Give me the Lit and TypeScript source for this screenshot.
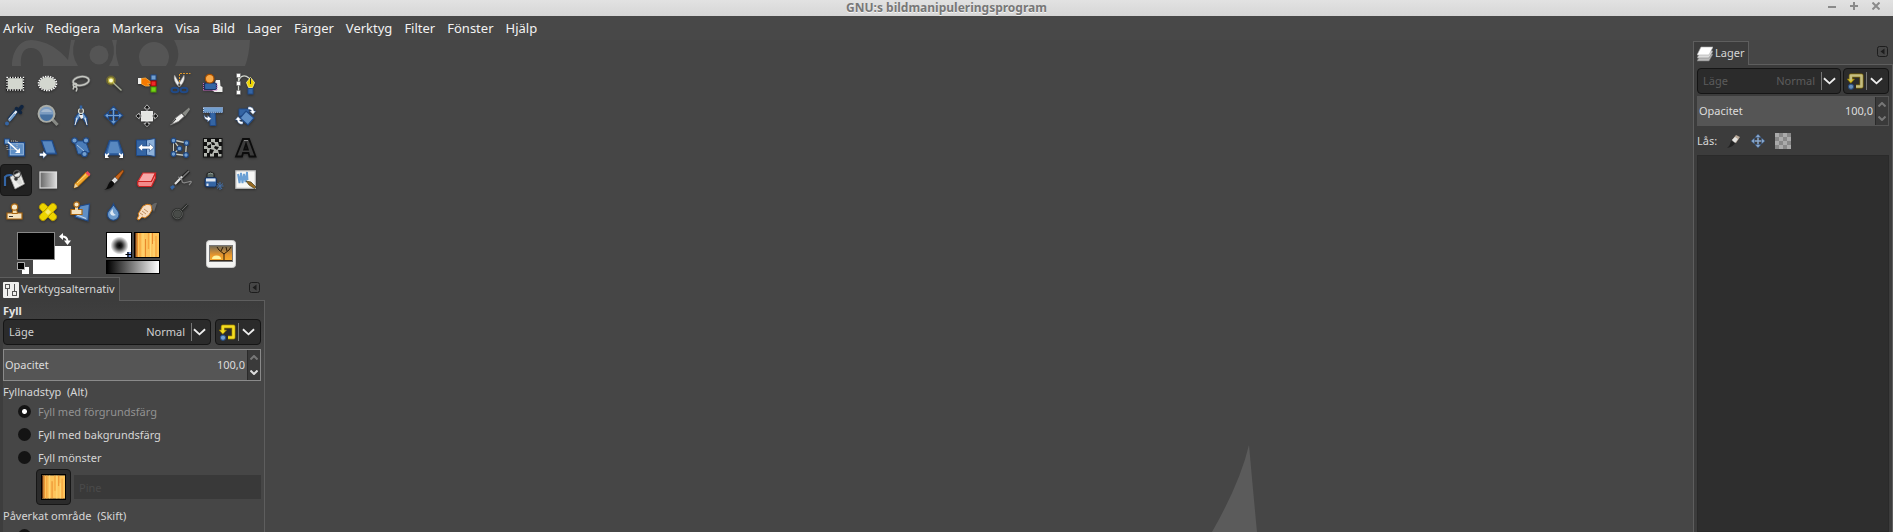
import { LitElement, html, css, svg } from "lit";
import { customElement, state } from "lit/decorators.js";

const B = "#3465a4";
const D = "#204a87";
const L = "#729fcf";

const tools: { name: string; art: unknown }[] = [
  { name: "Rektangelmarkering", art: svg`<rect x="4" y="5.5" width="16.5" height="12.5" fill="#d3d7cf" stroke="#000" stroke-width="1.4"/><rect x="4" y="5.5" width="16.5" height="12.5" fill="none" stroke="#fff" stroke-width="1.4" stroke-dasharray="1.3 1.3"/>` },
  { name: "Ellipsmarkering", art: svg`<ellipse cx="11.5" cy="11.5" rx="9" ry="7" fill="#d3d7cf" stroke="#222" stroke-width="1.2"/><ellipse cx="11.5" cy="11.5" rx="9" ry="7" fill="none" stroke="#fff" stroke-width="1.6" stroke-dasharray="1.5 1"/>` },
  { name: "Fri markering", art: svg`<g fill="none" stroke="#666"  stroke-width="3"><ellipse cx="12" cy="9" rx="8" ry="4.3" transform="rotate(-8 12 9)"/></g><g fill="none" stroke="#c4c6c0" stroke-width="1.5"><ellipse cx="12" cy="9" rx="8" ry="4.3" transform="rotate(-8 12 9)"/><circle cx="6" cy="13" r="1.8"/><path d="M6 14.5c3 1 2 3 1 5M5 14.5l-1 3"/></g>` },
  { name: "Luddig markering", art: svg`<path d="M11 10.5l8.5 8" stroke="#3b3e37" stroke-width="3"/><path d="M11 10.5l8.5 8" stroke="#a9ad9b" stroke-width="1.4"/><circle cx="9" cy="8.5" r="5" fill="#edd400" opacity=".25"/><circle cx="9" cy="8.5" r="3.2" fill="#f4e64a" opacity=".6"/><circle cx="9" cy="8.5" r="2" fill="#ffffd0"/>` },
  { name: "Markera efter färg", art: svg`<path d="M3 6h3.5v6H3z" fill="#eeeeec"/><path d="M6.500 6.500l4-.5 6 4.500v1.500l-4-.5 2 2.500h-4l-4-2z" fill="#f57900" stroke="#fcaf3e" stroke-width=".8"/><rect x="16" y="3" width="5" height="5" fill="${L}" stroke="${D}"/><rect x="16" y="9" width="5" height="5" fill="#ef2929" stroke="#a40000"/><rect x="16" y="15" width="5" height="5" fill="#73d216" stroke="#4e9a06"/>` },
  { name: "Sax", art: svg`<path d="M6.500 3c-1.500 5 1.500 9 4.500 12l1.500-2zM16 3c1.500 5-1.500 9-4.500 12l-1.500-2z" fill="#eeeeec" stroke="#888" stroke-width=".6"/><g fill="none" stroke="${D}" stroke-width="2"><ellipse cx="7" cy="18" rx="3.500" ry="2.300"/><ellipse cx="16" cy="18" rx="3.500" ry="2.300"/></g><path d="M11.500 10v-8.500h11" fill="none" stroke="#d9952a" stroke-dasharray="2 1"/>` },
  { name: "Förgrundsmarkering", art: svg`<path d="M11 18l2-5 2-5h4l.5 6 2 1v5h-8z" fill="#eeeeec"/><rect x="3.500" y="11" width="12" height="6.500" rx="1.500" fill="${B}" stroke="#1d2f60" stroke-width="1.200"/><circle cx="8.700" cy="6.700" r="4.300" fill="#f8a848" stroke="#a85000" stroke-width="1.200"/><path d="M2.500 18.500h13.500v-7M2.500 18v-7" fill="none" stroke="#c6c" stroke-width=".9" stroke-dasharray="1 1"/>` },
  { name: "Banor", art: svg`<path d="M4.500 3v17.500M4.500 11C5 4 10 2 15 6l3 2" fill="none" stroke="#d3d7cf" stroke-width="1.300"/><g fill="#fff" stroke="#666" stroke-width=".5"><rect x="2.500" y="1.500" width="4" height="4"/><rect x="2.500" y="9.500" width="4" height="4"/><rect x="2.500" y="18.500" width="4" height="4"/></g><path d="M16.500 5.500l4 5-2 5h-4l-2-5z" fill="#edd400" stroke="#fff6a0" stroke-width=".8"/><path d="M16.500 6v6" stroke="#333"/><rect x="14" y="16.500" width="5" height="5.500" fill="${B}" stroke="${D}"/>` },

  { name: "Färgpipett", art: svg`<path d="M15 5l-9 11" stroke="#16365f" stroke-width="4.500"/><path d="M15 5.500l-9 10.500" stroke="#e8eef5" stroke-width="2.200"/><path d="M12 10l-6 7" stroke="${L}" stroke-width="2"/><path d="M13.500 4.500l4 4M16 6l3-3.500" stroke="#10243f" stroke-width="3.500" stroke-linecap="round"/><circle cx="4" cy="19.500" r="2" fill="${B}"/>` },
  { name: "Zoom", art: svg`<path d="M16 15l5.500 6" stroke="#888a85" stroke-width="3.200"/><circle cx="10.500" cy="9.800" r="8" fill="#7d9cc0" stroke="#a9aca6" stroke-width="2"/><path d="M4 10.500h13a6.500 6.500 0 01-13 0z" fill="#47709f"/><path d="M5 8a6 5 0 0111 0z" fill="#a5b9cf"/>` },
  { name: "Mått", art: svg`<path d="M11 7l-5 7v7l5-8M13 7l5 7v7l-5-8" fill="${L}" stroke="${D}" stroke-width="1.200"/><path d="M8 14l-2 7M16 14l2 7" stroke="#eee"/><circle cx="12" cy="7" r="2.500" fill="#555" stroke="#d3d7cf" stroke-width="1.200"/><rect x="10.700" y="1.500" width="2.600" height="3.500" fill="${B}"/><path d="M10 11h4v3l-2 1z" fill="#eee"/>` },
  { name: "Flytta", art: svg`<path d="M11.500 3v17M3 11.500h17" stroke="${D}" stroke-width="3.200"/><path d="M11.500 2.300l3.700 4.200H7.800zM11.500 20.700l3.700-4.200H7.800zM2.300 11.500l4.200-3.700v7.400zM20.700 11.500l-4.200-3.700v7.400z" fill="${L}" stroke="${D}" stroke-width="1.200"/><path d="M11.500 4v15M4 11.500h15" stroke="${L}" stroke-width="1.200"/>` },
  { name: "Justering", art: svg`<rect x="6.500" y="7.500" width="11" height="9.500" fill="#e4e5e2" stroke="#fff" stroke-width=".8"/><g fill="#111" stroke="#ccc" stroke-width=".8"><path d="M12 .8l3 3.400h-2v2h-2v-2H9zM12 22.800l3-3.400h-2v-2h-2v2H9zM.8 12l3.400-3v2h2v2h-2v2zM23 12l-3.400-3v2h-2v2h2v2z"/></g>` },
  { name: "Beskär", art: svg`<path d="M21 3.500l-7 6 3 3 5-7z" fill="#888a85"/><path d="M14 9L8 13.500 2.500 21l8-3.500 6-5.500z" fill="#eeeeec" stroke="#777" stroke-width=".8"/><path d="M13.500 9l3.500 3.500M8 15l-4.500 5" stroke="#333"/>` },
  { name: "Enhetlig transformering", art: svg`<path d="M9 7h5l1 14.500H9z" fill="${B}" stroke="${D}"/><rect x="2.500" y="3.500" width="19" height="4.800" fill="${L}" stroke="${D}"/><rect x="2.500" y="3.500" width="19" height="4.800" fill="none" stroke="#dfe9f4" stroke-dasharray="1 1"/><path d="M3 10.500q1 3 3.500 3v-2l4 3.200-4 3.200v-2Q3 16 3 10.500z" fill="#fff" stroke="${D}" stroke-width=".5"/>` },
  { name: "Rotera", art: svg`<path d="M5 5h10v7H5z" fill="${B}" stroke="${D}"/><path d="M12 7l8 7-6 7-8-7z" fill="#5f8fc6" stroke="${D}" stroke-width="1.200"/><path d="M14 3q5-1 6 4h2l-3 3.500L15.500 7h2q-.5-2-3.500-1.500zM9 20q-5 1-6-4H1l3-3.500L7.500 16h-2q.5 2 3.500 1.500z" fill="#fff" stroke="${D}" stroke-width=".5"/>` },

  { name: "Skala", art: svg`<rect x="6" y="6.500" width="15.500" height="13.500" fill="#5f8fc6" stroke="${D}" stroke-width="1.300"/><rect x="7.300" y="7.800" width="13" height="11" fill="none" stroke="#9dbde0" stroke-width=".8"/><rect x="4" y="5" width="10" height="8.500" fill="none" stroke="#bbb" stroke-dasharray="1 1"/><rect x="1.500" y="3" width="5" height="5" fill="${L}" stroke="${D}"/><path d="M5 6l10 9" stroke="#fff" stroke-width="1.500"/><path d="M17 17v-5l-5 5z" fill="#fff"/>` },
  { name: "Skjuv", art: svg`<path d="M5.500 4.500h10.500l4.500 13.500H10z" fill="${B}" stroke="${D}" stroke-width="1.200"/><path d="M6.500 5.500h9l3.500 11h-8.500z" fill="#5888c0"/><path d="M3.500 17.300h3.500v-2.300l4 3.700-4 3.700v-2.400H3.500z" fill="#fff" stroke="${D}" stroke-width=".5"/>` },
  { name: "Handtagstransformering", art: svg`<path d="M5 5h11.500l4 11-5 2H9z" fill="#4a7cb8" stroke="${D}"/><g fill="${L}" stroke="${D}" stroke-width="1.200"><circle cx="5.500" cy="4.500" r="2.700"/><circle cx="17" cy="4.500" r="2.700"/><circle cx="15.500" cy="18" r="2.700"/></g><path d="M8 9l7 6" stroke="#a8c4e2"/>` },
  { name: "Perspektiv", art: svg`<path d="M7.500 4.500h9l5 14.500h-19z" fill="${B}" stroke="${D}" stroke-width="1.200"/><path d="M8.500 6h7l3 11H5.500z" fill="#5888c0"/><path d="M3 22v-5l1.500 1.500 2-1.500 1 1-2 2L7 22zM21 22v-5l-1.500 1.500-2-1.500-1 1 2 2L17 22z" fill="#fff"/>` },
  { name: "Vänd", art: svg`<path d="M1.500 4h10v15.500h-10z" fill="${B}" stroke="${D}"/><path d="M11.500 4L20 2.500v18L11.500 19z" fill="#8db1da" stroke="${D}"/><path d="M3 11.500l4.500-4V10h7V7.500l4.500 4-4.500 4V13h-7v2.500z" fill="#fff" stroke="${D}" stroke-width=".6"/>` },
  { name: "Burtransformering", art: svg`<path d="M5.500 4l13 3-1 12.500L5.500 18l6-5.500z" fill="none" stroke="#c8ccc4" stroke-width="1.300"/><path d="M5.500 4v14" stroke="#c8ccc4"/><g fill="${L}" stroke="${D}" stroke-width="1.200"><circle cx="5.500" cy="4.500" r="2.300"/><circle cx="18.500" cy="7" r="2.300"/><circle cx="18" cy="19" r="2.300"/><circle cx="5.500" cy="18" r="2.300"/><circle cx="11.500" cy="12.500" r="2.300"/></g>` },
  { name: "Varptransformering", art: svg`<rect x="2.500" y="2.500" width="18.500" height="18.500" fill="#b4b7b1" stroke="#111"/><path d="M6 3h4v3H6zM14 3h4v3h-4zM3 6h3v4H3zM10 6c3 0 4 1 4 3h-3zM17 6h4v4h-3zM6 10l4-2v4H7zM14 10l4 1-2 3-3-2zM3 13h3v4H3zM9 13l4 1-2 4-3-1zM17 14h4v4h-3zM6 17h3v4H6zM13 17h4v4h-4z" fill="#111"/>` },
  { name: "Text", art: svg`<path fill-rule="evenodd" d="M9 3h6l6.500 17.500h-6l-1-3.500H9l-1 3.500H2zM12 8l-1.800 5.500h3.600z" fill="#3c3c3c" stroke="#0c0c0c" stroke-width="1.800"/><path d="M10 4.500h4" stroke="#888"/>` },

  { name: "Hinkfyllning", art: svg`<path d="M2 18V9q3-3 8-1" fill="none" stroke="${B}" stroke-width="2.200"/><path d="M7 9l10-5 4.500 12-9.500 5z" fill="#eeeeec" stroke="#999" stroke-width=".8"/><path d="M9 10l7-3.500 3.500 9-3 1.500z" fill="#d8d9d6"/><circle cx="14" cy="6" r="3.500" fill="none" stroke="#555" stroke-width="1.300"/><circle cx="13" cy="11" r="1.800" fill="#333"/>` },
  { name: "Övertoning", art: svg`<defs><linearGradient id="gr"><stop offset="0" stop-color="#666"/><stop offset="1" stop-color="#ddd"/></linearGradient></defs><rect x="4" y="4" width="16.500" height="16" fill="url(#gr)" stroke="#ddd" stroke-width="1.200"/>` },
  { name: "Blyertspenna", art: svg`<path d="M17 4l3.500 3.500L9 18.500 5 20l1-4.500z" fill="#f0a830" stroke="#9a5a00" stroke-width=".9"/><path d="M16.500 5l3.500 3.500 1.500-2.500-3-3z" fill="#ef4a5a"/><path d="M6 15.500L9 18.500 5 20z" fill="#e9d3a8"/><path d="M8 15L17 6.500" stroke="#fce08a"/>` },
  { name: "Pensel", art: svg`<path d="M20.500 2L13 9l3 3 6-9z" fill="#c4641c" stroke="#6d3000" stroke-width=".7"/><path d="M13 9l3 3-3.500 3.500-3-3z" fill="#ddd" stroke="#666" stroke-width=".6"/><path d="M9.500 12.500l3 3q-2 5-10.500 6.500 3-1 4-5 1-3 3.500-4.500z" fill="#0c0c0c"/>` },
  { name: "Radergummi", art: svg`<path d="M8 5h12.500l-4 8.500H3z" fill="#f7a8a8" stroke="#d33" stroke-width="1.200"/><path d="M3 13.500h13.500l4-8.500v5l-4 8.500H4q-2-1-1-5z" fill="#f28a8a" stroke="#c22" stroke-width="1.200"/>` },
  { name: "Sprutpistol", art: svg`<path d="M21 3L8 15.500" stroke="#222" stroke-width="3.600"/><path d="M21 3L8 15.500" stroke="#777" stroke-width="1.500"/><path d="M14 8.500L7 16" stroke="#ddd" stroke-width="2"/><path d="M10 9q4 1 4 4t6 1 1 3" fill="none" stroke="#8a8a8a" stroke-width="1.200"/><path d="M2 19l3-2 2 2-3 3z" fill="${B}"/>` },
  { name: "Bläck", art: svg`<path d="M6 9.500V5.500q3.500-3 7 0v4z" fill="#56635e" stroke="#222"/><path d="M7 6q2.500-1.500 5 0" fill="none" stroke="#8d9893"/><rect x="4" y="9.500" width="11.500" height="9.500" rx="2" fill="${B}" stroke="#16305a"/><path d="M5 10.500h9.500v3H5zM5.500 15.500h2v2.500h-2z" fill="#dfe6ee"/><path d="M16 20.500l6-5M16.500 15l4.500 6M19 14v8M15.500 18h7" stroke="#4470a8"/>` },
  { name: "MyPaint-pensel", art: svg`<rect x="1.800" y="2.800" width="19.500" height="17.500" fill="#f7f7f5" stroke="#bbb" stroke-width="1.200"/><path d="M4 6l1.500 9 1.500-10 1.500 10 1.500-9 1.500 8 1.500-10 .5 8" fill="none" stroke="#6a9fd4" stroke-width="1.900"/><path d="M12 13l5 1 5 5-1.500 1.500L15 17z" fill="#9a6a22" stroke="#442" stroke-width=".7"/>` },

  { name: "Klona", art: svg`<path d="M4 13h15v6H4z" fill="#f4e3c0" stroke="#a86510" stroke-width="1.200"/><path d="M10 9h3.500l1 4.500h-5.500z" fill="#f1dcae" stroke="#a86510"/><circle cx="11.500" cy="7" r="3.200" fill="#f6e8c8" stroke="#a86510" stroke-width="1.200"/><path d="M6 16.500h4" stroke="#333"/>` },
  { name: "Hela", art: svg`<g fill="#edd400" stroke="#b39800" stroke-width=".9"><rect x="1.500" y="8.500" width="21" height="7" rx="3" transform="rotate(45 12 12)"/><rect x="1.500" y="8.500" width="21" height="7" rx="3" transform="rotate(-45 12 12)"/></g><path d="M9 12l3-3 3 3-3 3z" fill="#f9ea6a"/>` },
  { name: "Perspektivkloning", art: svg`<path d="M11 6l9.500-2-1.500 17L6 17z" fill="#5f8fc6" stroke="${D}" stroke-width="1.200"/><path d="M8 15l9 3.500" stroke="#c3d6ea" stroke-width="1.200"/><path d="M2 9.500h11v5H2z" fill="#f4e3c0" stroke="#a86510" stroke-width="1.200"/><path d="M6 6h3v4H6z" fill="#f1dcae"/><circle cx="7.500" cy="4.500" r="2.700" fill="#f6e8c8" stroke="#a86510" stroke-width="1.200"/>` },
  { name: "Gör oskarp/skarp", art: svg`<path d="M11.500 4q1 3 4 6.500a5.800 5.800 0 11-8.500 0q3.500-3.500 4.500-6.500z" fill="#6f9ccc" stroke="${D}" stroke-width="1.100"/><path d="M8 13q.5-2 3-4-1 4 3 6-5 2-6-2z" fill="#dbe7f3"/>` },
  { name: "Smeta", art: svg`<path d="M16 6q4-4 6-3l-3 9z" fill="#666"/><path d="M8 6q4-3 8-1l1 5-3 5-4 3-3-1-3 3-2-1 2-4-1-1z" fill="#f6dcc0" stroke="#c9781a"/><path d="M7 11l4 3M9 9l4 3M5 13l3 2" stroke="#a86a30" stroke-width=".7"/>` },
  { name: "Skugga/efterbelys", art: svg`<path d="M13 11l6.500-6.500" stroke="#2b2d2b" stroke-width="3"/><path d="M13 11l6.500-6.500" stroke="#666"/><circle cx="9.500" cy="14" r="4.800" fill="#484b48" stroke="#2a2c2a" stroke-width="2.200"/><circle cx="9.500" cy="14" r="4.800" fill="none" stroke="#686a68" stroke-width=".8"/>` },
];

const menus = ["Arkiv", "Redigera", "Markera", "Visa", "Bild", "Lager", "Färger", "Verktyg", "Filter", "Fönster", "Hjälp"];

const chevron = svg`<svg class="chev" viewBox="0 0 14 8" aria-hidden="true"><path d="M1 1l6 5.500L13 1" fill="none" stroke="#eee" stroke-width="2"/></svg>`;
const up = svg`<svg viewBox="0 0 8 5" width="8" height="5"><path d="M.5 4.500L4 1l3.500 3.500" fill="none" stroke="currentColor" stroke-width="2"/></svg>`;
const down = svg`<svg viewBox="0 0 8 5" width="8" height="5"><path d="M.5.5L4 4 7.500.5" fill="none" stroke="currentColor" stroke-width="2"/></svg>`;
const wood = svg`<svg viewBox="0 0 24 24" class="fill"><rect width="24" height="24" fill="#fdc45c"/><path d="M.5 0v24" stroke="#6b3410" stroke-width="2"/><path d="M2.500 0v24M10.500 6v18M17.500 0v11" stroke="#e8892c" stroke-width="1"/><path d="M5 0v24M13.500 0v16M21 3v21" stroke="#f6a53e" stroke-width="1.300"/><path d="M8 0v24M15.500 0v24M19 8v16" stroke="#ffd978" stroke-width="1"/></svg>`;

@customElement("dock-menu-button")
export class DockMenuButton extends LitElement {
  static styles = css`
    :host { display: block; margin-left: auto; }
    .b { display: block; padding: 0; border: 0; background: none; width: 11px; height: 11px; }
    svg { display: block; }
  `;
  render() {
    return html`<button class="b" aria-label="Konfigurera denna flik"><svg width="11" height="11" viewBox="0 0 11 11"><rect x=".5" y=".5" width="10" height="10" rx="2" fill="none" stroke="#1d1d1d"/><path d="M7.500 2.500v6l-4-3z" fill="#1d1d1d"/></svg></button>`;
  }
}

@customElement("mode-row")
export class ModeRow extends LitElement {
  static properties = { off: { type: Boolean, reflect: true } };
  declare off: boolean;
  static styles = css`
    :host { display: flex; gap: 4px; height: 26px; }
    :host([off]) { gap: 2px; }
    .box { box-sizing: border-box; display: flex; align-items: center; border: 1px solid #151515; border-radius: 4px; background: #2b2b2b; color: #d0d0d0; }
    .mode { flex: 1; min-width: 0; padding: 0 4px 0 5px; }
    .group { width: 46px; padding: 0 5px 0 3px; justify-content: space-between; }
    select { appearance: none; flex: 1; min-width: 0; height: 24px; border: 0; padding: 0 6px 0 0; background: none; color: inherit; font: inherit; text-align: right; text-align-last: right; opacity: 1; }
    .sep { width: 1px; height: 18px; background: #777; margin-right: 1px; }
    .chev { width: 13px; height: 8px; display: block; }
    :host([off]) label, :host([off]) select { color: #5c5c5c; }
    :host([off]) .art { opacity: .85; }
    button { font: inherit; }
  `;
  render() {
    return html`
      <div class="box mode"><label for="mode">Läge</label>
        <select id="mode" ?disabled=${this.off}><option>Normal</option></select><span class="sep"></span>${chevron}</div>
      <button class="box group" aria-label="Växla lägesgrupp">
        <svg class="art" width="17" height="17" viewBox="0 0 17 17"><g fill="none" stroke-linejoin="round"><path d="M3.800 7V2.500h10.700v11H9" stroke="#8a7000" stroke-width="4"/><path d="M0 6h7.600L3.800 10.200z" fill="#f5dc20" stroke="#8a7000" stroke-width=".7"/><path d="M3.800 7.500V2.500h10.700v11H9" stroke="${this.off ? "#e0d890" : "#f5dc20"}" stroke-width="2.600"/></g><circle cx="4" cy="13.700" r="2.600" fill="${L}" stroke="${D}"/></svg>
        <span class="sep"></span>${chevron}</button>`;
  }
}

@customElement("opacity-row")
export class OpacityRow extends LitElement {
  static properties = { off: { type: Boolean, reflect: true } };
  declare off: boolean;
  static styles = css`
    :host { box-sizing: border-box; display: flex; align-items: center; height: 32px; border: 1px solid #8a8a8a; background: #555; color: #dcdcdc; padding-left: 1px; }
    :host([off]) { border-color: #555; height: 30px; }
    input { flex: 1; min-width: 0; border: 0; background: none; color: inherit; font: inherit; padding: 0 2px 0 0; text-align: right; }
    .spin { align-self: stretch; display: grid; grid-template-rows: 1fr 1fr; width: 12px; background: #3a3a3a; border-left: 1px solid #2a2a2a; }
    button { padding: 0; border: 0; background: none; color: #ddd; display: grid; place-items: center; }
    button.dim, :host([off]) button { color: #777; }
  `;
  render() {
    return html`<label for="o">Opacitet</label><input id="o" value="100,0" />
      <span class="spin"><button class="dim" aria-label="Öka">${up}</button><button aria-label="Minska">${down}</button></span>`;
  }
}

@customElement("app-root")
export class AppRoot extends LitElement {
  @state() private tool = 24;

  static styles = css`
    :host { display: flex; flex-direction: column; height: 100vh; overflow: hidden; background: #464646; color: #d6d6d6; font: 11px/16px "Noto Sans", "Open Sans", sans-serif; }
    * { box-sizing: border-box; }
    button { font: inherit; color: inherit; }
    svg { display: block; }
    .title { flex: none; height: 16px; display: grid; grid-template-columns: 1fr auto 1fr; align-items: start; background: linear-gradient(#e2e2e2, #d6d6d6); color: #777; }
    h1 { grid-column: 2; margin: 0; font-size: 12px; line-height: 15px; font-weight: 700; text-shadow: 0 1px #f4f4f4; }
    .wins { justify-self: end; display: flex; gap: 14px; padding: 2px 13px 0 0; }
    .wins button { border: 0; padding: 0; background: none; width: 8px; height: 8px; }
    .menu { flex: none; height: 24px; display: flex; gap: 12px; padding-left: 3px; background: #484848; }
    .menu button { border: 0; padding: 0; background: none; color: #f2f2f2; font-size: 13px; line-height: 24px; }
    .work { flex: 1; min-height: 0; display: flex; }
    .left { flex: none; width: 265px; display: flex; flex-direction: column; }
    .wilber { flex: none; height: 28px; width: 265px; }
    .tools { display: grid; grid-template-columns: repeat(8, 33px); grid-auto-rows: 32px; }
    .tool { padding: 0; border: 1px solid transparent; border-radius: 4px; background: none; display: grid; place-items: center; width: 32px; }
    .tool.on { background: #222; border-color: #171717; }
    .tool svg { width: 24px; height: 24px; overflow: visible; filter: drop-shadow(0 1px 1px #0005); }
    .ind { display: flex; align-items: flex-start; height: 49px; padding: 4px 29px 0 17px; }
    .colors { width: 54px; display: grid; grid-template: 14px 14px 14px / 16px 22px 16px; }
    .fg { grid-area: 1 / 1 / 3 / 3; z-index: 1; background: #000; border: 1px solid #888; padding: 0; }
    .bg { grid-area: 2 / 2 / 4 / 4; background: #fff; border: 0; padding: 0; }
    .swap { grid-area: 1 / 3; border: 0; background: none; padding: 0 0 0 4px; }
    .reset { grid-area: 3 / 1; border: 0; background: none; padding: 2px 0 0 0; }
    .brushes { margin-left: 35px; display: grid; grid-template: 26px 14px / 26px 26px; gap: 2px; }
    .brushes button { border: 1px solid #000; padding: 0; background: #fff; overflow: hidden; }
    .brushes .grad { grid-column: 1 / 3; background: linear-gradient(90deg, #000, #fff); }
    .fill { width: 100%; height: 100%; }
    .active { margin: 8px 0 0 auto; border: 0; padding: 0; background: none; }
    .tabs { flex: none; height: 24px; display: flex; }
    .tab { display: flex; align-items: center; gap: 2px; border: 1px solid #5e5e5e; border-width: 1px 1px 0 0; background: #3c3c3c; color: #d6d6d6; padding: 0 4px 0 3px; }
    .tab span { line-height: 16px; padding-bottom: 1px; }
    .strip { flex: 1; display: flex; align-items: flex-start; padding: 5px 5px 0 0; border-bottom: 1px solid #5e5e5e; }
    .opts { flex: 1; min-height: 0; overflow: hidden; border-right: 1px solid #5e5e5e; background: linear-gradient(#3c3c3c, #464646 60px); padding: 0 3px; display: flex; flex-direction: column; box-shadow: inset 3px 0 #3d3d3d; }
    .opts > * { flex: none; }
    h2 { margin: 2px 0 0; font-size: 11px; line-height: 16px; color: #e4e4e4; }
    .opts opacity-row { margin-top: 4px; }
    fieldset { border: 0; margin: 0; padding: 0; min-width: 0; }
    legend { padding: 3px 0 0; line-height: 16px; white-space: pre; }
    .radio { display: flex; align-items: center; gap: 7px; height: 23px; padding-left: 15px; }
    .radio.off { color: #929292; }
    .radio input { appearance: none; margin: 0; width: 13px; height: 13px; border-radius: 50%; background: #141414; }
    .radio input:checked { background: radial-gradient(#fff 0 2px, #141414 3px); }
    .pat { display: flex; align-items: center; gap: 3px; padding-left: 33px; height: 36px; }
    .pat button { width: 35px; height: 36px; border: 1px solid #171717; border-radius: 4px; background: #2b2b2b; padding: 4px; }
    .pat .fill { border: 1px solid #000; }
    .pat input { flex: 1; min-width: 0; height: 24px; border: 0; background: #393939; color: #4a4a4a; font: inherit; padding: 0 5px; }
    .canvas { flex: 1; min-width: 0; }
    .right { flex: none; width: 200px; display: flex; flex-direction: column; }
    .right .tabs { margin-top: 1px; }
    .right .tab { border-left-width: 1px; }
    .layers { flex: 1; min-height: 0; display: flex; flex-direction: column; border: 1px solid #5e5e5e; border-width: 0 1px; background: #3c3c3c; padding: 3px 3px 0; }
    .layers opacity-row { margin-top: 2px; }
    .lock { display: flex; align-items: center; height: 29px; gap: 10px; }
    .lock label { display: flex; }
    .lock input { appearance: none; margin: 0; width: 0; height: 0; }
    .list { flex: 1; background: #2e2e2e; border: 1px solid #2a2a2a; }
  `;

  render() {
    return html`
      <header class="title">
        <h1>GNU:s bildmanipuleringsprogram</h1>
        <div class="wins">
          <button aria-label="Minimera"><svg viewBox="0 0 8 8"><path d="M0 5h8" stroke="#8a8a8a" stroke-width="2"/></svg></button>
          <button aria-label="Maximera"><svg viewBox="0 0 8 8"><path d="M0 4h8M4 0v8" stroke="#8a8a8a" stroke-width="2"/></svg></button>
          <button aria-label="Stäng"><svg viewBox="0 0 8 8"><path d="M.5.5l7 7M7.500.5l-7 7" stroke="#8a8a8a" stroke-width="2"/></svg></button>
        </div>
      </header>
      <nav class="menu">${menus.map((m) => html`<button>${m}</button>`)}</nav>
      <div class="work">
        <aside class="left">
          <svg class="wilber" viewBox="0 0 265 28" aria-hidden="true">
            <path d="M12 26C12 11 20 0 31 0Q52 1 68 20L71 0H250Q249 16 245 26H43C44 15 39 8 31 8S20 15 21 26z" fill="#555"/>
            <path d="M75 0h37Q117 14 109 26H78Q70 14 75 0z" fill="#464646"/><circle cx="99" cy="15" r="9.500" fill="#555"/>
            <path d="M117 0h57q8 14 1 26H119q-5-14-2-26z" fill="#464646"/><path d="M142 26a15 15 0 1124 0z" fill="#555"/>
          </svg>
          <div class="tools">
            ${tools.map((t, i) => html`<button class="tool ${i === this.tool ? "on" : ""}" aria-label=${t.name} @click=${() => (this.tool = i)}><svg viewBox="1 0 24 24">${t.art}</svg></button>`)}
          </div>
          <div class="ind">
            <div class="colors">
              <button class="fg" aria-label="Förgrundsfärg"></button><button class="bg" aria-label="Bakgrundsfärg"></button>
              <button class="swap" aria-label="Växla färger"><svg width="12" height="12" viewBox="0 0 12 12"><path d="M3 3.500Q8 3.500 8.500 8" fill="none" stroke="#fff" stroke-width="2"/><path d="M4 0v7L0 3.500zM5 7.500h7L8.500 12z" fill="#fff"/></svg></button>
              <button class="reset" aria-label="Standardfärger"><svg width="12" height="12" viewBox="0 0 12 12"><path d="M5 5h7v7H5z" fill="#fff"/><path d="M.5.5h7v7h-7z" fill="#000" stroke="#aaa"/></svg></button>
            </div>
            <div class="brushes">
              <button aria-label="Pensel"><svg class="fill" viewBox="0 0 24 24"><defs><radialGradient id="br"><stop offset="0"/><stop offset=".3" stop-color="#222"/><stop offset="1" stop-color="#fff"/></radialGradient></defs><circle cx="12.500" cy="12.500" r="9" fill="url(#br)"/><path d="M20 19h4v5h-4z" fill="#7d9be0"/><path d="M18.500 21.500h5.500M21 19v5" stroke="#000" stroke-width="1.200"/></svg></button>
              <button aria-label="Mönster">${wood}</button>
              <button class="grad" aria-label="Övertoning"></button>
            </div>
            <button class="active" aria-label="Aktiv bild"><svg width="30" height="28" viewBox="0 0 30 28"><defs><linearGradient id="sk" x2="0" y2="1"><stop offset="0" stop-color="#6f6a58"/><stop offset=".6" stop-color="#e8962c"/><stop offset="1" stop-color="#f9b030"/></linearGradient></defs><rect x=".5" y=".5" width="29" height="27" rx="3" fill="#f4f4f2" stroke="#ccc"/><rect x="3.500" y="5.500" width="23" height="16" fill="url(#sk)" stroke="#777"/><path d="M6 19a4.500 3.500 0 019 0z" fill="#fff3a0"/><path d="M4 20.500h22" stroke="#3a2a18"/><path d="M18 20v-6l-5-4-2-3M18 14l5-4 2-3M21 11l-1-4M15 11l2-4" fill="none" stroke="#2a1a08"/></svg></button>
          </div>
          <div class="tabs">
            <button class="tab"><svg width="16" height="16" viewBox="0 0 16 16"><rect width="16" height="16" rx="1" fill="#f0f0ee"/><g fill="none" stroke="#555"><path d="M4.500 7v7M11.500 2v7"/><rect x="2.500" y="2.500" width="4" height="4"/><rect x="9.500" y="9.500" width="4" height="4"/></g></svg><span>Verktygsalternativ</span></button>
            <div class="strip"><dock-menu-button></dock-menu-button></div>
          </div>
          <section class="opts">
            <h2>Fyll</h2>
            <mode-row></mode-row>
            <opacity-row></opacity-row>
            <fieldset>
              <legend>Fyllnadstyp  (Alt)</legend>
              <label class="radio off"><input type="radio" name="f" checked />Fyll med förgrundsfärg</label>
              <label class="radio"><input type="radio" name="f" />Fyll med bakgrundsfärg</label>
              <label class="radio"><input type="radio" name="f" />Fyll mönster</label>
            </fieldset>
            <div class="pat"><button aria-label="Välj mönster">${wood}</button><input aria-label="Mönsternamn" value="Pine" disabled /></div>
            <fieldset>
              <legend>Påverkat område  (Skift)</legend>
              <label class="radio"><input type="radio" name="a" aria-label="Fyll hel markering" /></label>
            </fieldset>
          </section>
        </aside>
        <svg class="canvas" viewBox="0 0 1428 492" preserveAspectRatio="xMidYMin slice" aria-hidden="true"><path d="M984 405Q975 443 947 492h45q-4-42-8-87z" fill="#5b5b5b"/></svg>
        <aside class="right">
          <div class="tabs">
            <button class="tab"><svg width="16" height="16" viewBox="0 0 16 16"><path d="M4 8h12l-4 7H0z" fill="#bbb" stroke="#777" stroke-width=".6"/><path d="M4 5h12l-4 7H0z" fill="#ddd" stroke="#888" stroke-width=".6"/><path d="M4 1h12l-4 8H0z" fill="#fff" stroke="#aaa" stroke-width=".6"/></svg><span>Lager</span></button>
            <div class="strip"><dock-menu-button></dock-menu-button></div>
          </div>
          <section class="layers">
            <mode-row off></mode-row>
            <opacity-row off></opacity-row>
            <div class="lock"><span>Lås:</span>
              <label aria-label="Lås bildpunkter"><input type="checkbox" /><svg width="14" height="14" viewBox="0 0 14 14"><path d="M9 1l4 2-4 6-4-3z" fill="#b8a898"/><path d="M8 3l3 2-3 4-3-3z" fill="#e4e4e2"/><path d="M4 7l4 2q-2 4-8 5 3-2 4-7z" fill="#222"/></svg></label>
              <label aria-label="Lås position"><input type="checkbox" /><svg width="14" height="14" viewBox="0 0 14 14"><path d="M7 2v10M2 7h10" stroke="#8aa8cc" stroke-width="1.500"/><path d="M7 0l3 3.500H4zM7 14l3-3.500H4zM0 7l3.500-3v6zM14 7l-3.500-3v6z" fill="#8aa8cc" stroke="#33507a" stroke-width=".6"/></svg></label>
              <label aria-label="Lås alfakanal"><input type="checkbox" /><svg width="16" height="16" viewBox="0 0 16 16"><defs><pattern id="ck" width="8" height="8" patternUnits="userSpaceOnUse"><rect width="8" height="8" fill="#888"/><path d="M0 0h4v4H0zM4 4h4v4H4z" fill="#aaa"/></pattern></defs><rect width="16" height="16" fill="url(#ck)"/></svg></label>
            </div>
            <div class="list"></div>
          </section>
        </aside>
      </div>`;
  }
}
